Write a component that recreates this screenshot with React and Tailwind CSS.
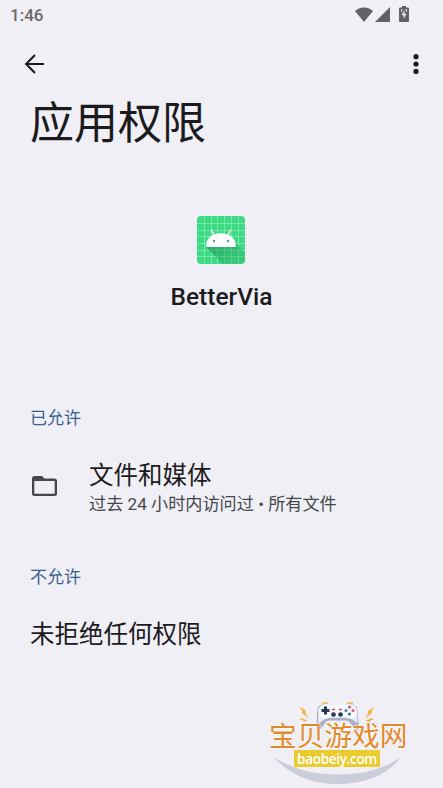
import React from "react";

const Wifi = () => (
  <svg width="18" height="15" viewBox="0 0 18 15" fill="#616164">
    <path d="M0 4.1C2.2 1.8 5.3.4 9 .4s6.800 1.400 9 3.700L9 15z" />
  </svg>
);

const Signal = () => (
  <svg width="15" height="15" viewBox="0 0 15 15" fill="#616164">
    <path d="M15 0v15H0z" />
  </svg>
);

const Battery = () => (
  <svg width="10" height="16" viewBox="0 0 10 16">
    <path d="M3 0h4v1.500h2q1 0 1 1V15q0 1-1 1H1q-1 0-1-1V2.500q0-1 1-1h2z" fill="#616164" />
    <path d="M5.500 4L2.500 9.300h2.200v3.700L7.500 8H5.500z" fill="#f0eff5" />
    <path d="M2 3.500h2L2 6.500zM6.500 3H8v4z" fill="#f0eff5" />
  </svg>
);

const Back = () => (
  <svg width="20" height="20" viewBox="0 0 20 20" fill="none" stroke="#1b1b1d" strokeWidth="2.100">
    <path d="M20 10H2M11 1.100L2.100 10l8.900 8.900" />
  </svg>
);

const More = () => (
  <svg width="6" height="20" viewBox="0 0 6 20" fill="#1b1b1d">
    <circle cx="3" cy="2.700" r="2.600" />
    <circle cx="3" cy="10" r="2.600" />
    <circle cx="3" cy="17.400" r="2.600" />
  </svg>
);

const AppIcon = () => (
  <svg width="48" height="48" viewBox="0 0 48 48">
    <defs>
      <clipPath id="tile"><rect width="48" height="48" rx="4" /></clipPath>
      <linearGradient id="shade" x1="0" y1="0" x2="1" y2="1">
        <stop offset="0" stopColor="#168a4c" stopOpacity=".65" />
        <stop offset="1" stopColor="#168a4c" stopOpacity=".12" />
      </linearGradient>
    </defs>
    <g clipPath="url(#tile)">
      <rect width="48" height="48" fill="#3ddc84" />
      <path
        d="M7.500 0v48M14.500 0v48M20.500 0v48M27.500 0v48M34.500 0v48M41.500 0v48M0 7.500h48M0 14.500h48M0 20.500h48M0 27.500h48M0 34.500h48M0 40.500h48"
        stroke="#8eecb7" strokeWidth=".7"
      />
      <path d="M9 31L26 48H48V38L36.500 24 39 31z" fill="url(#shade)" />
      <path d="M9 31C9 22 15 17.300 24 17.300S39 22 39 31z" fill="#fff" />
      <path d="M17 19L14.200 13.200M31 19L33.800 13.200" stroke="#fff" strokeWidth="1.300" />
      <circle cx="17" cy="25" r="1.200" fill="#3fa873" />
      <circle cx="31" cy="25" r="1.200" fill="#3fa873" />
    </g>
  </svg>
);

const Folder = () => (
  <svg width="25" height="20" viewBox="0 0 25 20">
    <path
      fillRule="evenodd"
      d="M2.500 0H10l2.400 2.500h10.100Q25 2.500 25 5v12.500q0 2.500-2.500 2.500h-20Q0 20 0 17.500v-15Q0 0 2.500 0zM2.300 5v12.700h20.400V5z"
      fill="#44474b"
    />
  </svg>
);

const Gamepad = () => (
  <svg width="80" height="34" viewBox="0 0 80 34">
    <path d="M24 2.500h6M49 2.500h6" stroke="#edbd62" strokeWidth="2.500" />
    <path
      d="M26 3.500h27c5 0 6.500 3 6.800 8l1.200 14c.2 4-2.500 5-4.500 1.500L51 21q-1-1.500-3-1.500H31q-2 0-3 1.500L22.500 28c-2 3-4 2-3.800-2L19 12c.3-5 2-8.500 7-8.500z"
      fill="#a9afc1"
    />
    <path
      d="M27 3h25.500q6.500 1 6.700 8l.5 11L53 18q-2-1-4-1H31q-2 0-4 1l-7 5 .3-12Q20.500 4 27 3z"
      fill="#e9ebf3"
    />
    <path d="M28 3.500h23.500q7 1.500 7 7t-6 7q-4 0-5-2H32.500q-1.500 2-5 2-7-.5-7-7t7.500-7z" fill="#f8f9fc" />
    <path d="M27.500 5.500v8M23.500 9.500h8" stroke="#263850" strokeWidth="3" />
    <circle cx="35.500" cy="13.500" r="2.300" fill="#263850" />
    <circle cx="42.500" cy="13.500" r="2.300" fill="#263850" />
    <path d="M34 8.500h3M41 8.500h3" stroke="#d84c64" strokeWidth="1.300" />
    <circle cx="51.500" cy="6" r="1.500" fill="#dd4b59" />
    <circle cx="55" cy="9.500" r="1.500" fill="#e25b64" />
    <circle cx="51.500" cy="13" r="1.500" fill="#2c6d9c" />
    <circle cx="48" cy="9.500" r="1.500" fill="#398bad" />
    <g fill="#f1ad2b">
      <path d="M1 5.500l6.500 4-.5 2.200 4 5.300-7-5 .5-2zM1 19l3-2 2 1.500 4 .5-4 1.500-2-2zM77 6l-7 4 .5 2.200-3.500 5.300 7-5.500-.5-2zM76 18.500l-3-1.500-2 1.500-3.500 1 4 1.500 1.500-2z" />
    </g>
  </svg>
);

const Swoosh = () => (
  <svg className="absolute left-0 top-[55px]" width="138" height="30" viewBox="0 0 138 30">
    <path d="M3.500 1C25 14 44 18.500 68 18.500S112 14 131 1C118 19 95 28 68 28S20 19 3.500 1z" fill="#cbcdda" />
  </svg>
);

const Watermark = () => (
  <div className="absolute left-[270px] top-[701px] h-[87px] w-[140px]">
    <Swoosh />
    <div className="absolute left-[28px] top-0"><Gamepad /></div>
    <div className="absolute left-[-1px] top-[22px] h-[27px] whitespace-nowrap text-[27.700px] font-normal leading-[28px] text-[#e28a2c] [text-shadow:0_0_2px_#fff,0_0_2px_#fff]">
      宝贝游戏网
    </div>
    <div className="absolute left-[24px] top-[49px] flex h-[17px] w-[86px] items-center justify-center bg-[#e9cc2f] font-['Open_Sans',sans-serif] text-[13.500px] font-semibold leading-[16px] tracking-[-0.300px] text-white">
      baobeiy.com
    </div>
  </div>
);

export default function App() {
  return (
    <main className="relative flex h-[788px] w-[443px] flex-col overflow-hidden bg-[#f0eff5] font-[Roboto,'Noto_Sans_CJK_SC',sans-serif] text-[#1b1b1d]">
      <header className="flex h-[30px] items-center justify-between pl-[10px] pr-[34px]">
        <span className="text-[17px] font-medium leading-[30px] text-[#68686b]">1:46</span>
        <div className="flex h-full items-start pt-[6px]">
          <div className="pt-px"><Wifi /></div>
          <div className="ml-[2px] pt-px"><Signal /></div>
          <div className="ml-[9px]"><Battery /></div>
        </div>
      </header>
      <nav className="flex h-[68px] items-center justify-between pl-[24px] pr-[24px]">
        <Back />
        <More />
      </nav>
      <h1 className="mt-[4px] h-[40px] pl-[30px] text-[44px] font-normal leading-[44px]">应用权限</h1>
      <section className="flex flex-col items-center pt-[74px]">
        <div className="mr-px"><AppIcon /></div>
        <h2 className="mt-[18px] text-[24.500px] font-medium leading-[30px]">BetterVia</h2>
      </section>
      <section className="px-[30px] pt-[94px]">
        <h3 className="text-[17px] leading-[24px] text-[#37618e]">已允许</h3>
        <div className="mt-[30px] flex items-center">
          <div className="ml-[2px] w-[57px] pb-[4px]"><Folder /></div>
          <div>
            <div className="text-[24.500px] leading-[32px]">文件和媒体</div>
            <div className="text-[17.150px] leading-[24px] text-[#44474b]">过去 24 小时内访问过 • 所有文件</div>
          </div>
        </div>
      </section>
      <section className="px-[30px] pt-[49px]">
        <h3 className="text-[17px] leading-[24px] text-[#37618e]">不允许</h3>
        <div className="mt-[30px] text-[24.500px] leading-[32px]">未拒绝任何权限</div>
      </section>
      <Watermark />
    </main>
  );
}
